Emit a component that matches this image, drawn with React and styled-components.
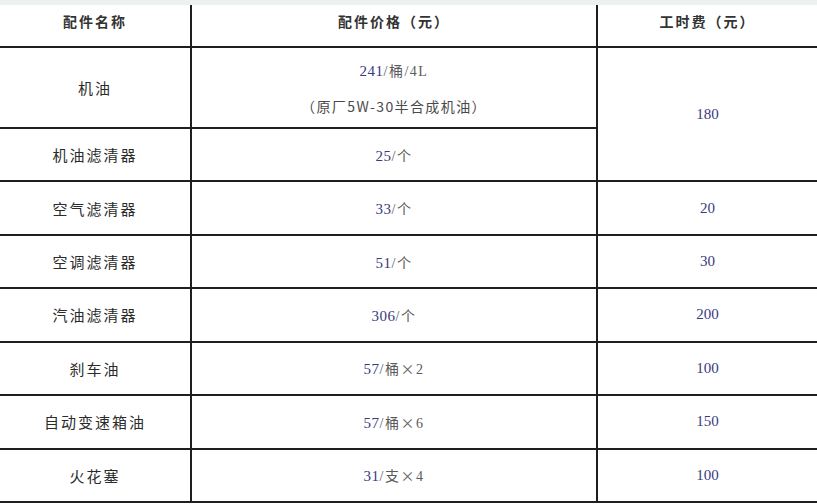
import React from 'react';
import styled, { createGlobalStyle } from 'styled-components';

const GlobalStyle = createGlobalStyle`
  html, body {
    margin: 0;
    padding: 0;
    background: #fff;
  }
  body {
    font-family: "Noto Sans CJK SC", "Liberation Sans", sans-serif;
  }
`;

const Page = styled.div`
  width: 817px;
  height: 504px;
  overflow: hidden;
  background: #fff;
`;

const TopStrip = styled.div`
  height: 5px;
  background: #eef1f1;
`;

const Grid = styled.div`
  display: grid;
  grid-template-columns: 192px 406px 219px;
  grid-template-rows: 43px 81px repeat(7, 53.43px);
`;

const Cell = styled.div`
  display: flex;
  flex-direction: column;
  align-items: center;
  justify-content: center;
  box-sizing: border-box;
  border-bottom: 2px solid #1e1e1e;
  border-right: ${(p) => (p.$last ? 'none' : '2px solid #1e1e1e')};
  grid-row: ${(p) => (p.$span ? `span ${p.$span}` : 'auto')};
  gap: ${(p) => (p.$gap ? `${p.$gap}px` : '0')};
`;

const HeadText = styled.span`
  font-size: 14px;
  font-weight: 700;
  color: #333;
  letter-spacing: 2px;
  margin-bottom: 10px;
`;

const NameText = styled.span`
  font-size: 15px;
  color: #2b2b2b;
  letter-spacing: 2px;
`;

const PriceText = styled.span`
  font-size: 14px;
  color: #5a5a5a;
  letter-spacing: 1.5px;
  font-family: "Liberation Serif", "Noto Sans CJK SC", serif;
`;

const Num = styled.span`
  color: #393980;
  font-family: "Liberation Serif", serif;
  font-size: 15px;
  letter-spacing: ${(p) => (p.$plain ? '0' : '0.5px')};
`;

const Wide = styled.span`
  font-family: "Noto Sans CJK SC", sans-serif;
  color: #666;
`;

const Note = styled.span`
  font-size: 14px;
  color: #4a4a4a;
  letter-spacing: 1.4px;
`;

const rows = [
  { name: '机油滤清器', num: '25', unit: '/个', fee: null },
  { name: '空气滤清器', num: '33', unit: '/个', fee: '20' },
  { name: '空调滤清器', num: '51', unit: '/个', fee: '30' },
  { name: '汽油滤清器', num: '306', unit: '/个', fee: '200' },
  { name: '刹车油', num: '57', unit: '/桶', times: '2', fee: '100' },
  { name: '自动变速箱油', num: '57', unit: '/桶', times: '6', fee: '150' },
  { name: '火花塞', num: '31', unit: '/支', times: '4', fee: '100' },
];

export default function App() {
  return (
    <Page>
      <GlobalStyle />
      <TopStrip />
      <Grid>
        <Cell><HeadText>配件名称</HeadText></Cell>
        <Cell><HeadText>配件价格（元）</HeadText></Cell>
        <Cell $last><HeadText>工时费（元）</HeadText></Cell>

        <Cell><NameText>机油</NameText></Cell>
        <Cell $gap={16}>
          <PriceText><Num>241</Num>/桶/4L</PriceText>
          <Note>（原厂5W-30半合成机油）</Note>
        </Cell>
        <Cell $last $span={2}><Num $plain>180</Num></Cell>

        {rows.map((r) => (
          <React.Fragment key={r.name}>
            <Cell><NameText>{r.name}</NameText></Cell>
            <Cell>
              <PriceText>
                <Num>{r.num}</Num>{r.unit}
                {r.times && <><Wide>×</Wide>{r.times}</>}
              </PriceText>
            </Cell>
            {r.fee && <Cell $last><Num $plain>{r.fee}</Num></Cell>}
          </React.Fragment>
        ))}
      </Grid>
    </Page>
  );
}
